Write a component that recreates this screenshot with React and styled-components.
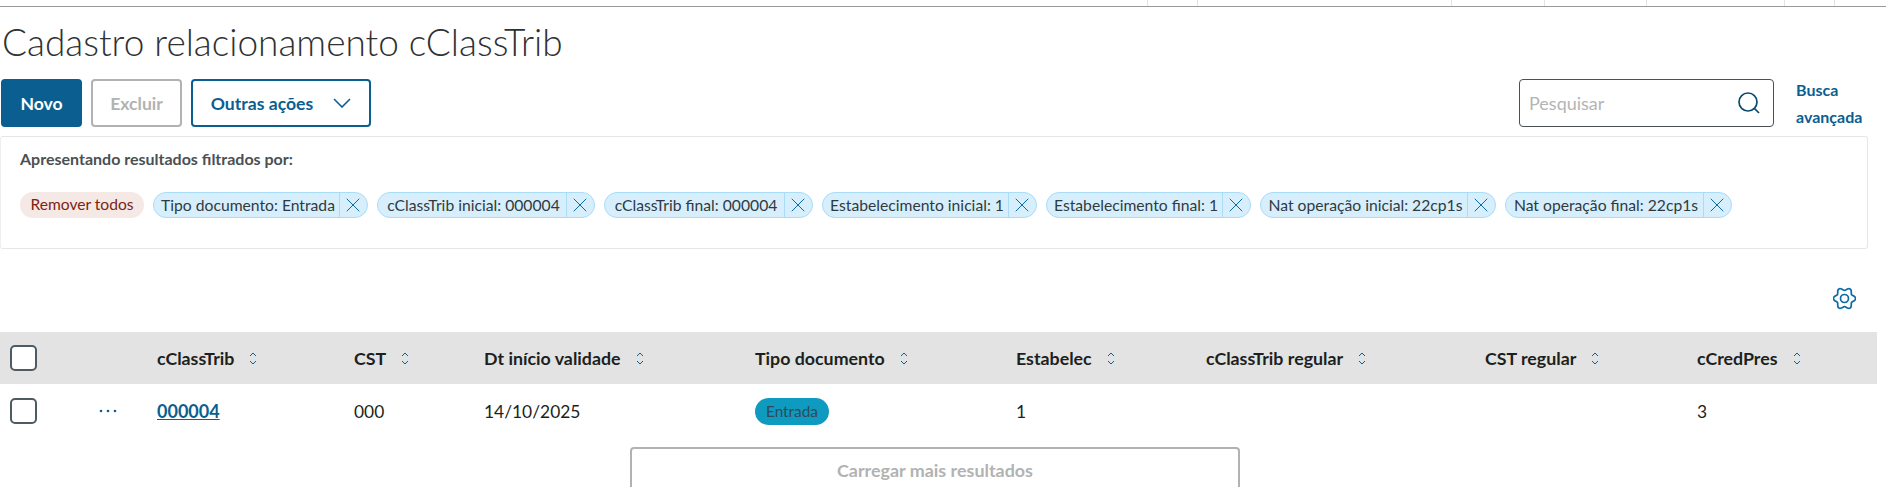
import React from 'react'
import styled, { createGlobalStyle } from 'styled-components'
import { X } from 'lucide-react'

const Global = createGlobalStyle`
  html, body {
    margin: 0;
    padding: 0;
    background: #fff;
    overflow: hidden;
  }
  body {
    font-family: Lato, "Noto Sans", sans-serif;
  }
`

const Page = styled.div`
  width: 1886px;
  height: 487px;
  overflow: hidden;
  display: flex;
  flex-direction: column;
  & > * {
    flex: none;
  }
`

const TopStrip = styled.div`
  height: 7px;
  box-sizing: border-box;
  border-bottom: 1px solid #9a9a9a;
  display: grid;
  grid-template-columns: 1148px 50px 254px 93px 102px 138px 50px 1fr;
  & > div {
    border-right: 1px solid #e4e4e4;
  }
  & > div:last-child {
    border-right: 0;
  }
`

const Title = styled.h1`
  margin: 11px 0 0 2px;
  height: 48px;
  line-height: 48px;
  font-size: 37px;
  font-weight: 300;
  color: #2f3132;
  white-space: nowrap;
`

const Toolbar = styled.div`
  display: flex;
  align-items: stretch;
  height: 48px;
  margin: 13px 0 0 1px;
  gap: 9px;
`

const Button = styled.button`
  box-sizing: border-box;
  width: ${({ w }) => w}px;
  height: 48px;
  padding: 0;
  border-radius: 4px;
  font-family: inherit;
  font-size: 17.6px;
  font-weight: 700;
  display: flex;
  align-items: center;
  justify-content: center;
  gap: 20px;
  background: #fff;
  color: #0b5e90;
  border: 2px solid #0b5e90;
`

const PrimaryButton = styled(Button)`
  background: #0b5e90;
  color: #fff;
`

const DisabledButton = styled(Button)`
  color: #b2b2b2;
  border-color: #b2b2b2;
`

const SearchArea = styled.div`
  margin-left: auto;
  display: flex;
  align-items: center;
`

const SearchBox = styled.div`
  box-sizing: border-box;
  width: 255px;
  height: 48px;
  border: 1px solid #4a5054;
  border-radius: 4px;
  display: flex;
  align-items: center;
  justify-content: space-between;
  padding: 0 13px 0 9px;
  font-size: 18px;
  color: #b4b4b4;
`

const AdvancedLink = styled.a`
  width: 112px;
  padding-left: 22px;
  box-sizing: border-box;
  font-size: 16px;
  font-weight: 700;
  line-height: 27px;
  color: #0b5e90;
`

const FilterPanel = styled.div`
  box-sizing: border-box;
  width: 1868px;
  height: 113px;
  margin-top: 9px;
  padding: 13px 19px 0;
  border: 1px solid #e6e6e6;
  border-left-color: #efefef;
  border-radius: 3px;
`

const FilterLabel = styled.div`
  font-size: 16px;
  font-weight: 700;
  line-height: 18px;
  color: #4a5054;
`

const ChipRow = styled.div`
  display: flex;
  gap: 9px;
  margin-top: 24px;
`

const RemoveAll = styled.span`
  box-sizing: border-box;
  width: 124px;
  height: 26px;
  border-radius: 13px;
  background: #f5e9e6;
  color: #7c2412;
  font-size: 15.6px;
  line-height: 25px;
  text-align: center;
  white-space: nowrap;
`

const Chip = styled.span`
  box-sizing: border-box;
  width: ${({ w }) => w}px;
  height: 26px;
  display: flex;
  align-items: center;
  border: 1px solid #a8dcf7;
  border-radius: 13px;
  background: #d7effd;
  color: #2f3a40;
  font-size: 15.7px;
  white-space: nowrap;
`

const ChipText = styled.span`
  flex: 1;
  padding-left: 3px;
  text-align: center;
  line-height: 23px;
`

const ChipClose = styled.span`
  flex: none;
  box-sizing: border-box;
  height: 100%;
  width: 28px;
  padding-right: 2px;
  border-left: 1px solid #a8dcf7;
  display: flex;
  align-items: center;
  justify-content: center;
  color: #0b6aa8;
`

const GearRow = styled.div`
  display: flex;
  justify-content: flex-end;
  padding-right: 30px;
  margin-top: 38px;
  height: 45px;
`

const Row = styled.div`
  display: grid;
  grid-template-columns: 10px 147px 197px 130px 271px 261px 190px 279px 212px 1fr;
  align-items: center;
  width: 1877px;
  height: ${({ head }) => (head ? 52 : 54)}px;
  background: ${({ head }) => (head ? '#e3e3e3' : 'transparent')};
  font-size: 17.4px;
  color: #1d1f20;
`

const CheckBox = styled.span`
  box-sizing: border-box;
  display: block;
  flex: none;
  width: 27px;
  height: 26px;
  border: 2px solid #4f5b62;
  border-radius: 5px;
  background: #fff;
`

const HeadCell = styled.div`
  display: flex;
  align-items: center;
  gap: 15px;
  font-weight: 700;
  font-size: 17.8px;
`

const Cell = styled.div``

const SelectCell = styled.div`
  display: flex;
  align-items: center;
  gap: 62px;
`

const CodeLink = styled.a`
  color: #0b5e90;
  font-weight: 700;
  font-size: 18px;
  text-decoration: underline;
`

const StatusTag = styled.span`
  display: inline-block;
  width: 74px;
  height: 27px;
  border-radius: 14px;
  background: #0f9ac0;
  color: #2d4b58;
  font-size: 15.4px;
  line-height: 27px;
  text-align: center;
`

const LoadMore = styled.div`
  box-sizing: border-box;
  width: 610px;
  height: 60px;
  margin: 9px 0 0 630px;
  padding-top: 10px;
  border: 2px solid #b2b2b2;
  border-radius: 4px;
  text-align: center;
  font-size: 17.9px;
  line-height: 22px;
  font-weight: 700;
  color: #b2b2b2;
`

const SortSvg = styled.svg`
  flex: none;
`

const SortIcon = () => (
  <SortSvg width="8" height="13" viewBox="0 0 8 13" fill="none" stroke="#0b5e90" strokeWidth="1">
    <path d="M1 4 4 1 7 4" />
    <path d="M1 9 4 12 7 9" />
  </SortSvg>
)

const DownIcon = () => (
  <svg width="18" height="10" viewBox="0 0 18 10" fill="none" stroke="#0b5e90" strokeWidth="1.6">
    <path d="M1 1 9 9 17 1" />
  </svg>
)

const SearchIcon = () => (
  <svg width="22" height="22" viewBox="0 0 22 22" fill="none" stroke="#0b4a70" strokeWidth="1.7">
    <circle cx="10" cy="10" r="9" />
    <path d="M16.5 16.5 21 21" />
  </svg>
)

// six soft lobes, radius varies with the angle
const gearPath = [...Array(72)]
  .map((_, i) => {
    const a = (i * 5 * Math.PI) / 180
    const r = 9.6 + 1.5 * Math.cos(6 * a)
    const x = 11.5 + r * Math.cos(a)
    const y = 11.5 + r * Math.sin(a)
    return `${i ? 'L' : 'M'}${x.toFixed(2)} ${y.toFixed(2)}`
  })
  .join(' ') + ' Z'

const GearIcon = () => (
  <svg width="23" height="23" viewBox="0 0 23 23" fill="none" stroke="#0b6aa8" strokeWidth="1.7">
    <path d={gearPath} />
    <circle cx="11.5" cy="11.5" r="4" />
  </svg>
)

const DotsIcon = () => (
  <svg width="18" height="4" viewBox="0 0 18 4" fill="#0b5e90">
    <circle cx="2" cy="2" r="1.3" />
    <circle cx="9" cy="2" r="1.3" />
    <circle cx="16" cy="2" r="1.3" />
  </svg>
)

const chips = [
  ['Tipo documento: Entrada', 215],
  ['cClassTrib inicial: 000004', 218],
  ['cClassTrib final: 000004', 209],
  ['Estabelecimento inicial: 1', 215],
  ['Estabelecimento final: 1', 205],
  ['Nat operação inicial: 22cp1s', 236],
  ['Nat operação final: 22cp1s', 227],
]

const columns = [
  'cClassTrib',
  'CST',
  'Dt início validade',
  'Tipo documento',
  'Estabelec',
  'cClassTrib regular',
  'CST regular',
  'cCredPres',
]

const ticks = [...Array(8)]

export default function App() {
  return (
    <Page>
      <Global />
      <TopStrip>
        {ticks.map((_, i) => <div key={i} />)}
      </TopStrip>
      <Title>Cadastro relacionamento cClassTrib</Title>
      <Toolbar>
        <PrimaryButton w={81}>Novo</PrimaryButton>
        <DisabledButton w={91}>Excluir</DisabledButton>
        <Button w={180}>
          Outras ações
          <DownIcon />
        </Button>
        <SearchArea>
          <SearchBox>
            Pesquisar
            <SearchIcon />
          </SearchBox>
          <AdvancedLink>Busca avançada</AdvancedLink>
        </SearchArea>
      </Toolbar>
      <FilterPanel>
        <FilterLabel>Apresentando resultados filtrados por:</FilterLabel>
        <ChipRow>
          <RemoveAll>Remover todos</RemoveAll>
          {chips.map(([label, width]) => (
            <Chip key={label} w={width}>
              <ChipText>{label}</ChipText>
              <ChipClose><X size={24} strokeWidth={1} /></ChipClose>
            </Chip>
          ))}
        </ChipRow>
      </FilterPanel>
      <GearRow><GearIcon /></GearRow>
      <Row head>
        <span />
        <SelectCell><CheckBox /></SelectCell>
        {columns.map(c => (
          <HeadCell key={c}>{c}<SortIcon /></HeadCell>
        ))}
      </Row>
      <Row>
        <span />
        <SelectCell>
          <CheckBox />
          <DotsIcon />
        </SelectCell>
        <Cell><CodeLink>000004</CodeLink></Cell>
        <Cell>000</Cell>
        <Cell>14/10/2025</Cell>
        <Cell><StatusTag>Entrada</StatusTag></Cell>
        <Cell>1</Cell>
        <Cell />
        <Cell />
        <Cell>3</Cell>
      </Row>
      <LoadMore>Carregar mais resultados</LoadMore>
    </Page>
  )
}
